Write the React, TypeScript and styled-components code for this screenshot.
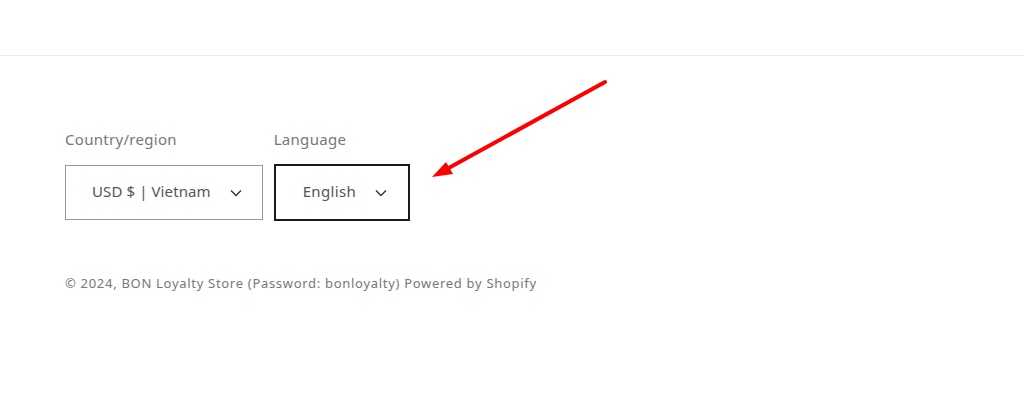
import styled, { createGlobalStyle } from "styled-components";

const GlobalStyle = createGlobalStyle`
  body {
    margin: 0;
    background: #fff;
    font-family: "Noto Sans", "Liberation Sans", sans-serif;
  }
`;

const Page = styled.div`
  position: relative;
  width: 1024px;
  height: 419px;
  overflow: hidden;
`;

const Top = styled.div`
  height: 55px;
  border-bottom: 1px solid #ececec;
`;

const Footer = styled.footer`
  padding: 71px 65px 0;
`;

const Localization = styled.div`
  display: flex;
  gap: 11px;
  align-items: flex-start;
`;

const Field = styled.div`
  display: flex;
  flex-direction: column;
`;

const Label = styled.span`
  font-size: 15px;
  color: #777;
  letter-spacing: 0.3px;
  line-height: 24px;
  margin-bottom: 14px;
`;

const Select = styled.div<{ $focused?: boolean }>`
  box-sizing: border-box;
  display: flex;
  align-items: center;
  gap: 19px;
  height: ${(p) => (p.$focused ? "57px" : "55px")};
  margin-top: ${(p) => (p.$focused ? "-1px" : "0")};
  padding: 0 ${(p) => (p.$focused ? "21px" : "20px")} 3px
    ${(p) => (p.$focused ? "27px" : "26px")};
  border: ${(p) => (p.$focused ? "2px solid #1a1a1a" : "1px solid #999")};
  font-size: 15px;
  color: #555;
  letter-spacing: ${(p) => (p.$focused ? "0.35px" : "0.1px")};
`;

const Chevron = styled.svg`
  width: 12px;
  height: 8px;
  flex: none;
  margin-top: 3px;
`;

const Copyright = styled.p`
  margin: 53px 0 0;
  font-size: 13px;
  color: #777;
  letter-spacing: 0.7px;
`;

const Arrow = styled.svg`
  position: absolute;
  left: 0;
  top: 0;
  pointer-events: none;
`;

function Down() {
  return (
    <Chevron viewBox="0 0 12 8">
      <path d="M1 1.5 L6 6.5 L11 1.5" fill="none" stroke="#333" strokeWidth="1.4" />
    </Chevron>
  );
}

export default function App() {
  return (
    <>
      <GlobalStyle />
      <Page>
        <Top />
        <Footer>
          <Localization>
            <Field>
              <Label>Country/region</Label>
              <Select>
                USD $ | Vietnam
                <Down />
              </Select>
            </Field>
            <Field>
              <Label>Language</Label>
              <Select $focused>
                English
                <Down />
              </Select>
            </Field>
          </Localization>
          <Copyright>© 2024, BON Loyalty Store (Password: bonloyalty) Powered by Shopify</Copyright>
        </Footer>
        <Arrow width="1024" height="419">
          <line x1="605" y1="82" x2="445" y2="170" stroke="#f00" strokeWidth="4" strokeLinecap="round" />
          <polygon points="432,177 446,162 453,174" fill="#f00" />
        </Arrow>
      </Page>
    </>
  );
}
